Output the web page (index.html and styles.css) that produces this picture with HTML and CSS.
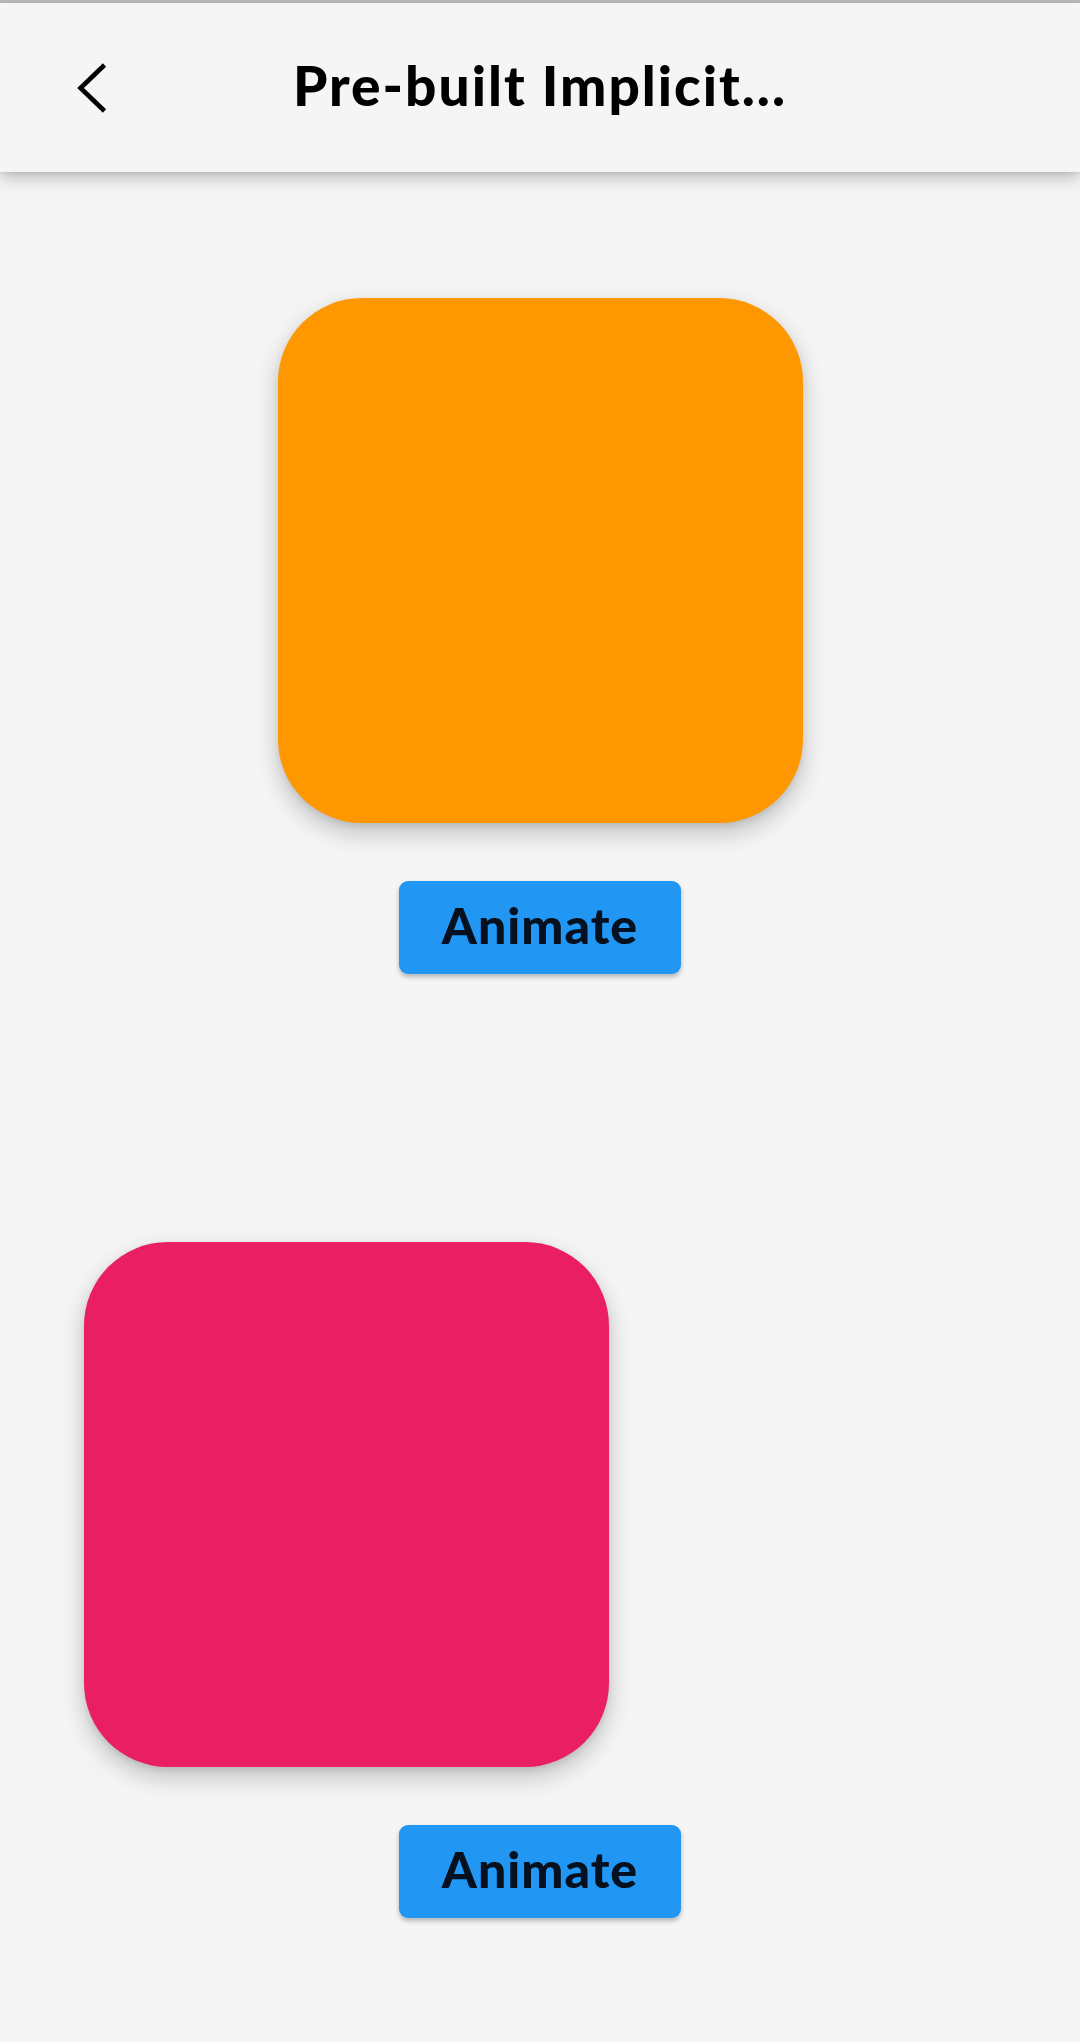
FILE: index.html
```html
<!DOCTYPE html>
<html lang="en">
<head>
<meta charset="utf-8">
<title>Pre-built Implicit Animations</title>
<link rel="stylesheet" href="styles.css">
</head>
<body>
<div class="status-edge"></div>
<header class="appbar">
  <div class="appbar-lead">
    <button class="back-btn" aria-label="Back">
      <svg class="back-icon" width="32" height="52" viewBox="0 0 32 52" aria-hidden="true">
        <path d="M28.5 3 L4.5 26 L28.5 49" fill="none" stroke="#000" stroke-width="4.6" stroke-linejoin="miter" stroke-linecap="butt"/>
      </svg>
    </button>
  </div>
  <h1 class="appbar-title">Pre-built Implicit...</h1>
  <div class="appbar-trail"></div>
</header>
<main class="content">
  <section class="demo">
    <div class="shape shape-orange"></div>
    <button class="animate-btn">Animate</button>
  </section>
  <section class="demo">
    <div class="shape shape-pink shape-start"></div>
    <button class="animate-btn">Animate</button>
  </section>
</main>
</body>
</html>
```
FILE: styles.css
```css
html, body {
  margin: 0;
  padding: 0;
}
body {
  background: #f5f5f5;
  width: 1080px;
  height: 2042px;
  overflow: hidden;
  font-family: "Lato", "Open Sans", sans-serif;
  color: #000;
}
.status-edge {
  height: 3px;
  background: #bcbcbc;
}
.appbar {
  height: 169px;
  background: #f5f5f5;
  display: grid;
  grid-template-columns: 1fr auto 1fr;
  align-items: center;
  box-shadow: 0 6px 16px rgba(0, 0, 0, 0.22), 0 2px 4px rgba(0, 0, 0, 0.08);
  position: relative;
  z-index: 2;
}
.appbar-lead {
  display: flex;
  align-items: center;
  padding-left: 76px;
}
.back-btn {
  border: 0;
  background: none;
  padding: 0;
  margin: 0;
  display: flex;
  cursor: pointer;
}
.back-icon {
  display: block;
}
.appbar-title {
  margin: 0;
  font-family: "Lato", sans-serif;
  font-weight: 900;
  font-size: 55px;
  letter-spacing: 2px;
  line-height: 1;
  color: #000;
  transform: translateY(-2px);
}
.content {
  display: flex;
  flex-direction: column;
  gap: 268px;
  padding-top: 126px;
}
.demo {
  display: flex;
  flex-direction: column;
  align-items: center;
  gap: 58px;
}
.shape {
  width: 525px;
  height: 525px;
  border-radius: 84px;
  box-shadow: 0 10px 24px rgba(0, 0, 0, 0.22), 0 3px 6px rgba(0, 0, 0, 0.08);
}
.shape-orange {
  background: #ff9800;
}
.shape-pink {
  background: #e91e63;
}
.shape-start {
  align-self: flex-start;
  margin-left: 84px;
}
.animate-btn {
  width: 282px;
  height: 93px;
  border: 0;
  border-radius: 9px;
  background: #2196f3;
  color: #06111f;
  font-family: "Lato", sans-serif;
  font-weight: 900;
  font-size: 50px;
  letter-spacing: 1px;
  line-height: 1;
  padding: 0 0 6px;
  box-shadow: 0 3px 5px rgba(0, 0, 0, 0.25);
  cursor: pointer;
}
```
